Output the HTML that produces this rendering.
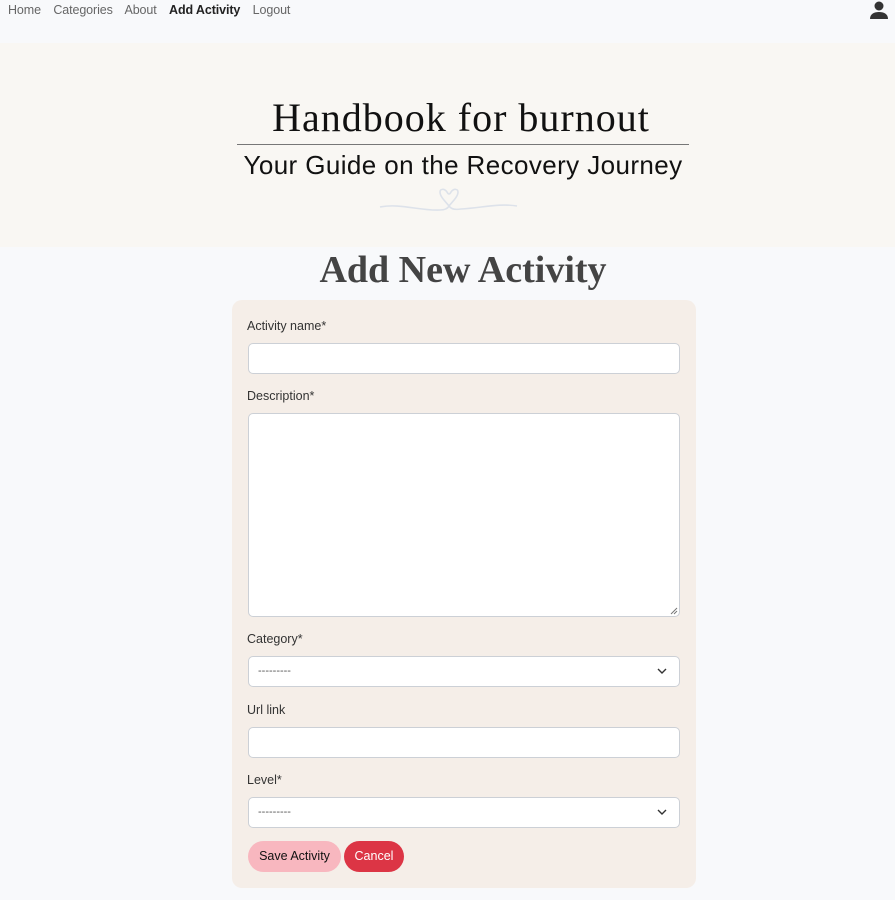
<!DOCTYPE html>
<html><head><meta charset="utf-8"><style>
*{box-sizing:border-box;margin:0;padding:0}
body{width:895px;height:900px;background:#f8f9fb;font-family:"Liberation Sans",sans-serif;position:relative;overflow:hidden}
nav{position:absolute;left:8px;top:3px;font-size:12.5px;color:#666;letter-spacing:-0.1px}
nav span{margin-right:9px}
nav b{color:#222;margin-right:9px}
.user{position:absolute;right:6px;top:0}
.hero{position:absolute;top:43px;left:0;width:895px;height:204px;background:#f9f7f3}
.t1{position:absolute;top:94px;left:0;width:922px;text-align:center;font-family:"Liberation Serif",serif;font-size:40px;color:#111;letter-spacing:1px}
.rule{position:absolute;top:144px;left:237px;width:452px;height:1px;background:#777}
.t2{position:absolute;top:150px;left:0;width:926px;text-align:center;font-size:26px;color:#111;letter-spacing:0.4px}
h1{position:absolute;top:248px;left:0;width:926px;text-align:center;font-family:"Liberation Serif",serif;font-size:38px;color:#444;font-weight:bold}
.card{position:absolute;left:232px;top:300px;width:464px;height:588px;background:#f5eee8;border-radius:10px}
label{position:absolute;left:247px;font-size:12.5px;color:#333;margin-top:1px}
.in{position:absolute;left:248px;width:432px;background:#fff;border:1px solid #ccd0d6;border-radius:5px}
.sel{font-size:11px;color:#555;padding:0 0 0 9px;line-height:28px}
.btn{position:absolute;top:841px;height:31px;border-radius:16px;font-size:12.5px;line-height:31px;text-align:center}
</style></head><body>
<nav><span>Home</span> <span>Categories</span> <span>About</span> <b>Add Activity</b> <span>Logout</span></nav>
<svg class="user" width="20" height="20" viewBox="0 0 20 20"><circle cx="10" cy="6" r="4.5" fill="#333"/><path d="M1 19c0-5 4-7 9-7s9 2 9 7z" fill="#333"/></svg>
<div class="hero"></div>
<div class="t1">Handbook for burnout</div>
<div class="rule"></div>
<div class="t2">Your Guide on the Recovery Journey</div>
<svg style="position:absolute;left:378px;top:186px" width="142" height="28" viewBox="0 0 142 28"><path d="M2 21c20-4 40 4 60 3 6 0 8-2 9-4M71 20c-3-4-9-9-9-14 0-3 4-4 7 0 1 2 2 2 2 2 0 0 1 0 2-2 3-4 7-3 7 0 0 5-6 10-9 14M71 20c2 3 6 4 12 3 20-1 38-6 56-3" fill="none" stroke="#dde2ea" stroke-width="1.6"/></svg>
<h1>Add New Activity</h1>
<div class="card"></div>
<label style="top:318px">Activity name*</label>
<div class="in" style="top:343px;height:31px"></div>
<label style="top:388px">Description*</label>
<div class="in" style="top:413px;height:204px"><svg style="position:absolute;right:1px;bottom:1px" width="8" height="8"><path d="M7 1L1 7M7 4L4 7" stroke="#777"/></svg></div>
<label style="top:631px">Category*</label>
<div class="in sel" style="top:656px;height:31px">---------<svg style="position:absolute;right:12px;top:11px" width="10" height="7"><path d="M1 1l4 4 4-4" fill="none" stroke="#333" stroke-width="1.4"/></svg></div>
<label style="top:702px">Url link</label>
<div class="in" style="top:727px;height:31px"></div>
<label style="top:772px">Level*</label>
<div class="in sel" style="top:797px;height:31px">---------<svg style="position:absolute;right:12px;top:11px" width="10" height="7"><path d="M1 1l4 4 4-4" fill="none" stroke="#333" stroke-width="1.4"/></svg></div>
<div class="btn" style="left:248px;width:93px;background:#f8b7bf;color:#111">Save Activity</div>
<div class="btn" style="left:344px;width:60px;background:#dc3545;color:#fff">Cancel</div>
</body></html>
